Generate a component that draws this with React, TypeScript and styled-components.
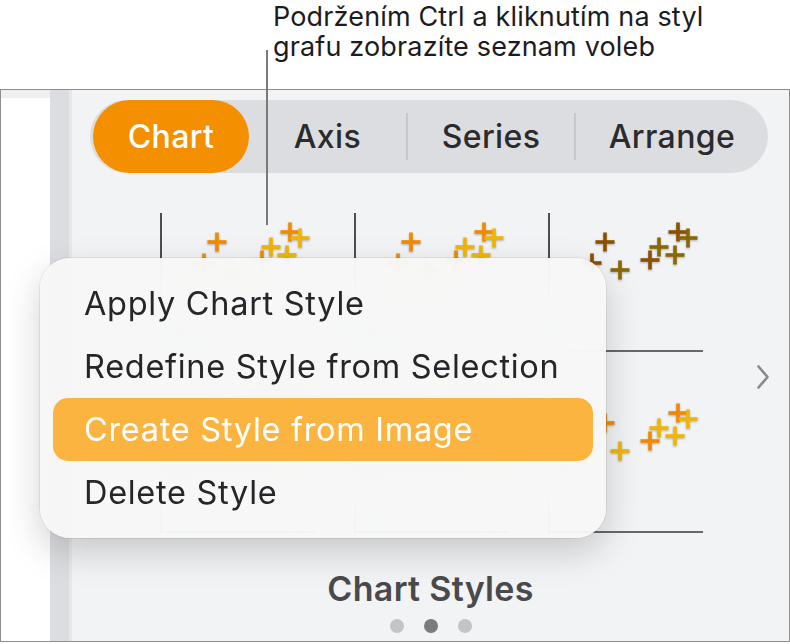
import React from "react";
import styled, { createGlobalStyle } from "styled-components";

type Tone = "warm" | "dark";

const PALETTE: Record<Tone, [string, string]> = {
  warm: ["#f28a00", "#f3b500"],
  dark: ["#8c5000", "#8a6800"],
};

// marker layout shared by every thumbnail: [x, y, series]
const MARKS: [number, number, 0 | 1][] = [
  [42, 50, 0],
  [55, 29, 0],
  [70, 57, 1],
  [100, 47, 0],
  [109, 34, 1],
  [125, 42, 1],
  [128, 19, 0],
  [138, 25, 1],
];

const THUMBS: Tone[] = ["warm", "warm", "dark", "warm", "warm", "warm"];

const TABS = [
  { label: "Chart", width: 156 },
  { label: "Axis", width: 157 },
  { label: "Series", width: 166 },
  { label: "Arrange", width: 0 },
];

const MENU = ["Apply Chart Style", "Redefine Style from Selection", "Create Style from Image", "Delete Style"];

const Plus = ({ x, y, color }: { x: number; y: number; color: string }) => (
  <g stroke={color} strokeWidth={3.6}>
    <line x1={x - 9.5} y1={y} x2={x + 9.5} y2={y} />
    <line x1={x} y1={y - 9.5} x2={x} y2={y + 9.5} />
  </g>
);

const Scatter = ({ tone }: { tone: Tone }) => (
  <ScatterSvg viewBox="0 0 153 137">
    {MARKS.map(([x, y, s]) => (
      <Plus key={`${x}-${y}`} x={x} y={y} color={PALETTE[tone][s]} />
    ))}
  </ScatterSvg>
);

const App = () => {
  return (
    <Page>
      <GlobalStyle />
      <Callout>
        Podržením Ctrl a kliknutím na styl
        <br />
        grafu zobrazíte seznam voleb
      </Callout>
      <LeaderLine />
      <Frame>
        <Sidebar>
          <Canvas />
          <Gutter />
        </Sidebar>
        <Inspector>
          <TabBar>
            {TABS.map((tab, i) => (
              <React.Fragment key={tab.label}>
                {i > 1 && <TabDivider />}
                <Tab active={i === 0} w={tab.width}>
                  {tab.label}
                </Tab>
              </React.Fragment>
            ))}
          </TabBar>
          <StylesArea>
            <ThumbGrid>
              {THUMBS.map((tone, i) => (
                <Thumb key={i}>
                  <Scatter tone={tone} />
                </Thumb>
              ))}
            </ThumbGrid>
            <Chevron viewBox="0 0 12 24">
              <polyline points="1.5,1.5 10.5,12 1.5,22.5" />
            </Chevron>
          </StylesArea>
          <SectionTitle>Chart Styles</SectionTitle>
          <Dots>
            <Dot />
            <Dot active />
            <Dot />
          </Dots>
        </Inspector>
      </Frame>
      <Menu>
        {MENU.map((item) => (
          <MenuItem key={item} highlighted={item === "Create Style from Image"}>
            {item}
          </MenuItem>
        ))}
      </Menu>
    </Page>
  );
};

export default App;

const GlobalStyle = createGlobalStyle`
  html, body {
    margin: 0;
    padding: 0;
    background: #ffffff;
  }
  body {
    font-family: Inter, "Noto Sans", sans-serif;
    -webkit-font-smoothing: antialiased;
  }
`;

const Page = styled.div`
  position: relative;
  width: 790px;
  height: 644px;
  overflow: hidden;
  background: #ffffff;
`;

const Callout = styled.div`
  height: 89px;
  box-sizing: border-box;
  padding: 2px 0 0 273px;
  font-size: 27px;
  line-height: 30px;
  letter-spacing: 0.15px;
  color: #1c1c1e;
`;

const LeaderLine = styled.div`
  position: absolute;
  left: 266px;
  top: 50px;
  width: 2px;
  height: 175px;
  background: #7a7a7a;
  z-index: 3;
`;

const Frame = styled.div`
  display: flex;
  width: 790px;
  height: 553px;
  box-sizing: border-box;
  border: 1px solid #8e8e8e;
`;

const Sidebar = styled.div`
  display: flex;
  width: 71px;
  flex-shrink: 0;
  background: #efeff0;
`;

const Canvas = styled.div`
  width: 49px;
  margin-top: 8px;
  background: #ffffff;
`;

const Gutter = styled.div`
  flex: 1;
  background: #dcdde0;
  border-right: 3px solid #e7e8ea;
`;

const Inspector = styled.div`
  flex: 1;
  display: flex;
  flex-direction: column;
  background: #f2f3f5;
`;

const TabBar = styled.div`
  display: flex;
  align-items: center;
  width: 678px;
  height: 73px;
  margin: 10px 0 0 18px;
  padding-left: 3px;
  box-sizing: border-box;
  border-radius: 37px;
  background: #dcdde0;
`;

const Tab = styled.div<{ active?: boolean; w: number }>`
  ${(p) => (p.w ? `width: ${p.w}px;` : "flex: 1;")}
  height: 73px;
  display: flex;
  align-items: center;
  justify-content: center;
  border-radius: 37px;
  font-size: 32px;
  letter-spacing: 0.4px;
  font-weight: 500;
  color: ${(p) => (p.active ? "#ffffff" : "#2b2b2d")};
  background: ${(p) => (p.active ? "#f48f00" : "transparent")};
`;

const TabDivider = styled.div`
  width: 2px;
  height: 47px;
  background: #c7c8cb;
`;

const StylesArea = styled.div`
  display: flex;
  align-items: center;
  margin-top: 40px;
  padding-left: 88px;
`;

const ThumbGrid = styled.div`
  display: grid;
  grid-template-columns: repeat(3, 155px);
  grid-auto-rows: 139px;
  column-gap: 39px;
  row-gap: 42px;
`;

const Thumb = styled.div`
  border-left: 2px solid #4e4e50;
  border-bottom: 2px solid #68686a;
`;

const ScatterSvg = styled.svg`
  display: block;
  width: 153px;
  height: 137px;
  overflow: visible;
  filter: drop-shadow(0 1px 1px rgba(0, 0, 0, 0.3));
`;

const Chevron = styled.svg`
  width: 12px;
  height: 24px;
  margin: 8px 0 0 54px;
  fill: none;
  stroke: #8a8a8d;
  stroke-width: 2.6;
  stroke-linecap: round;
  stroke-linejoin: round;
`;

const SectionTitle = styled.div`
  margin-top: 37px;
  text-align: center;
  font-size: 34px;
  line-height: 38px;
  letter-spacing: 0.3px;
  font-weight: 600;
  color: #4a4a4c;
`;

const Dots = styled.div`
  display: flex;
  justify-content: center;
  gap: 20px;
  margin-top: 11px;
`;

const Dot = styled.span<{ active?: boolean }>`
  width: 14px;
  height: 14px;
  border-radius: 50%;
  background: ${(p) => (p.active ? "#7b7b7d" : "#c4c4c6")};
`;

const Menu = styled.div`
  position: absolute;
  left: 40px;
  top: 258px;
  width: 566px;
  height: 280px;
  box-sizing: border-box;
  padding: 14px 13px;
  border-radius: 30px;
  background: rgba(247, 247, 247, 0.95);
  backdrop-filter: blur(30px);
  box-shadow: 0 0 0 1px rgba(0, 0, 0, 0.07), 0 14px 36px rgba(0, 0, 0, 0.18);
  z-index: 2;
`;

const MenuItem = styled.div<{ highlighted?: boolean }>`
  height: 63px;
  display: flex;
  align-items: center;
  padding-left: 31px;
  border-radius: 15px;
  font-size: 32.5px;
  letter-spacing: 0.7px;
  color: ${(p) => (p.highlighted ? "#ffffff" : "#262628")};
  background: ${(p) => (p.highlighted ? "#fcb441" : "transparent")};
`;
